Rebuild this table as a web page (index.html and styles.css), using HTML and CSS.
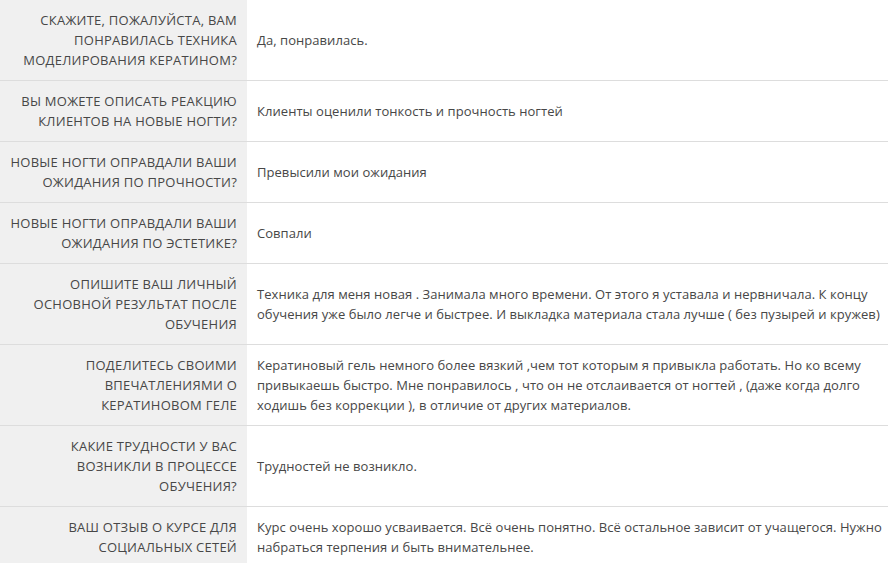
FILE: index.html
```html
<!DOCTYPE html>
<html lang="ru">
<head>
<meta charset="utf-8">
<title>Отзыв</title>
<link rel="stylesheet" href="styles.css">
</head>
<body>
<table class="qa">
  <tr>
    <th class="q">СКАЖИТЕ, ПОЖАЛУЙСТА, ВАМ<br>ПОНРАВИЛАСЬ ТЕХНИКА<br>МОДЕЛИРОВАНИЯ КЕРАТИНОМ?</th>
    <td class="a">Да, понравилась.</td>
  </tr>
  <tr>
    <th class="q">ВЫ МОЖЕТЕ ОПИСАТЬ РЕАКЦИЮ<br>КЛИЕНТОВ НА НОВЫЕ НОГТИ?</th>
    <td class="a">Клиенты оценили тонкость и прочность ногтей</td>
  </tr>
  <tr>
    <th class="q">НОВЫЕ НОГТИ ОПРАВДАЛИ ВАШИ<br>ОЖИДАНИЯ ПО ПРОЧНОСТИ?</th>
    <td class="a">Превысили мои ожидания</td>
  </tr>
  <tr>
    <th class="q">НОВЫЕ НОГТИ ОПРАВДАЛИ ВАШИ<br>ОЖИДАНИЯ ПО ЭСТЕТИКЕ?</th>
    <td class="a">Совпали</td>
  </tr>
  <tr>
    <th class="q">ОПИШИТЕ ВАШ ЛИЧНЫЙ<br>ОСНОВНОЙ РЕЗУЛЬТАТ ПОСЛЕ<br>ОБУЧЕНИЯ</th>
    <td class="a">Техника для меня новая . Занимала много времени. От этого я уставала и нервничала. К концу<br>обучения уже было легче и быстрее. И выкладка материала стала лучше ( без пузырей и кружев)</td>
  </tr>
  <tr>
    <th class="q">ПОДЕЛИТЕСЬ СВОИМИ<br>ВПЕЧАТЛЕНИЯМИ О<br>КЕРАТИНОВОМ ГЕЛЕ</th>
    <td class="a">Кератиновый гель немного более вязкий ,чем тот которым я привыкла работать. Но ко всему<br>привыкаешь быстро. Мне понравилось , что он не отслаивается от ногтей , (даже когда долго<br>ходишь без коррекции ), в отличие от других материалов.</td>
  </tr>
  <tr>
    <th class="q">КАКИЕ ТРУДНОСТИ У ВАС<br>ВОЗНИКЛИ В ПРОЦЕССЕ<br>ОБУЧЕНИЯ?</th>
    <td class="a">Трудностей не возникло.</td>
  </tr>
  <tr>
    <th class="q">ВАШ ОТЗЫВ О КУРСЕ ДЛЯ<br>СОЦИАЛЬНЫХ СЕТЕЙ</th>
    <td class="a">Курс очень хорошо усваивается. Всё очень понятно. Всё остальное зависит от учащегося. Нужно<br>набраться терпения и быть внимательнее.</td>
  </tr>
</table>
</body>
</html>
```
FILE: styles.css
```css
html, body {
  margin: 0;
  padding: 0;
  background: #ffffff;
}

body {
  font-family: "Open Sans", "Liberation Sans", sans-serif;
  font-size: 13px;
  line-height: 20px;
  color: #474747;
  overflow: hidden;
}

.qa {
  border-collapse: collapse;
  margin-top: -1px;
  width: 900px;
}

.qa tr {
  border-top: 1px solid #dddddd;
}

.q {
  width: 227px;
  background: #f0f0f0;
  text-align: right;
  font-weight: normal;
  letter-spacing: 0.25px;
  padding: 10px;
  white-space: nowrap;
  vertical-align: middle;
}

.a {
  text-align: left;
  letter-spacing: 0.05px;
  padding: 10px;
  white-space: nowrap;
  vertical-align: middle;
}
```
